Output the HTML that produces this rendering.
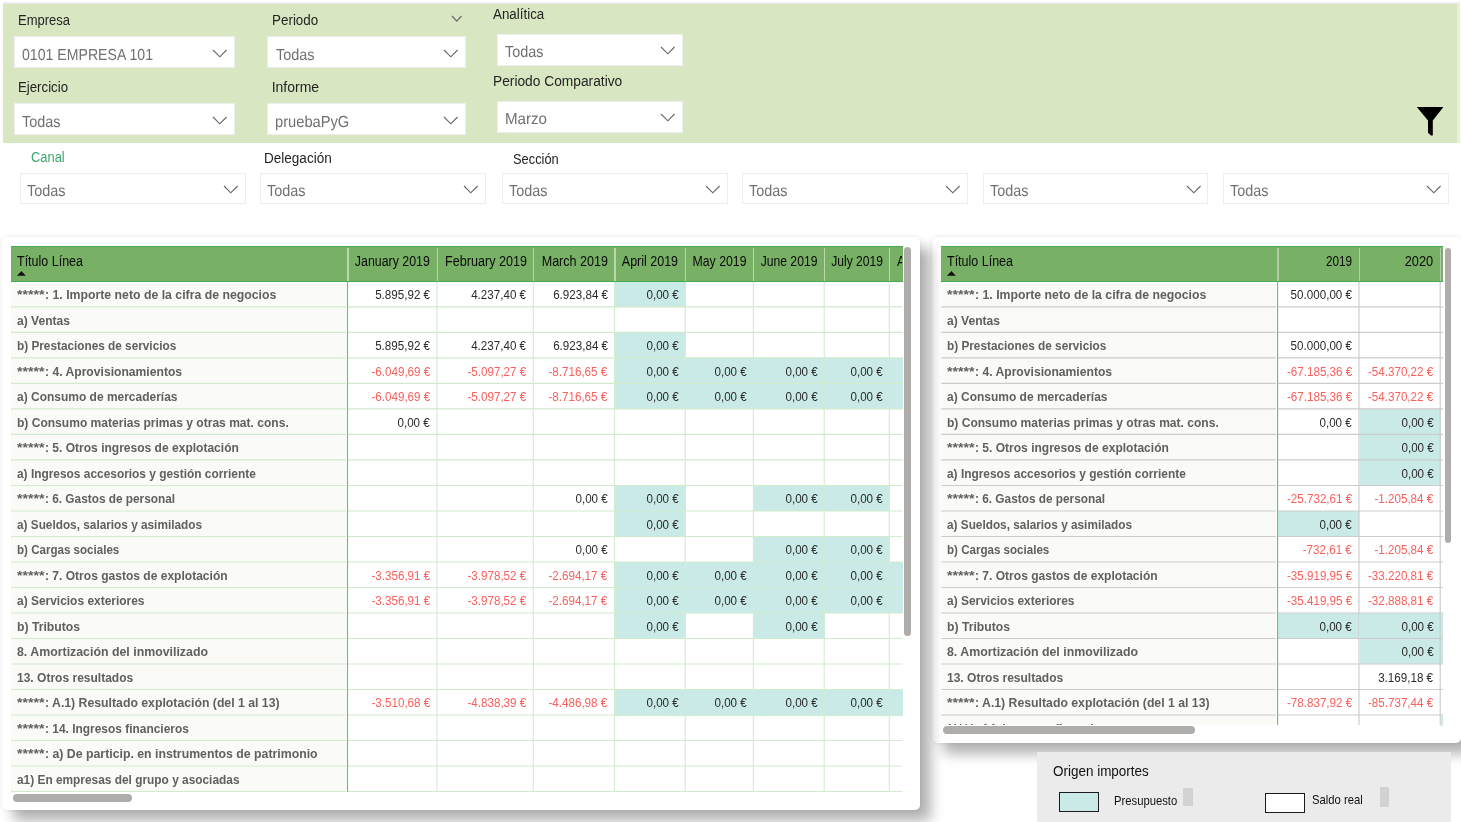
<!DOCTYPE html><html lang="es"><head><meta charset="utf-8"><title>Informe PyG</title><style>
html,body{margin:0;padding:0;background:#fff;}
body{width:1461px;height:822px;overflow:hidden;position:relative;font-family:"Liberation Sans",sans-serif;color:#222;}
#root{position:absolute;left:0;top:0;width:1461px;height:822px;will-change:transform;}
.t{position:absolute;white-space:nowrap;line-height:20px;}
.abs{position:absolute;}
.bar{position:absolute;left:3px;top:4px;width:1454px;height:139px;background:#d8e6c2;}
.dd{position:absolute;background:#fff;border:1.5px solid #ededed;box-sizing:border-box;}
.card{position:absolute;background:#fff;border-radius:5px;box-shadow:11px 11px 13px rgba(0,0,0,.30),0 0 5px rgba(0,0,0,.10);}
.hdr{position:absolute;background:#78b166;border-top:1px solid #4bab55;border-bottom:1px solid #44aa50;box-sizing:border-box;}
.sb{position:absolute;background:#aeadab;border-radius:4px;}
</style></head><body><div id="root">
<div class="abs" style="left:3px;top:2px;width:1457px;height:1px;background:#f1f1f2"></div>
<div class="abs" style="left:3px;top:3px;width:1457px;height:1px;background:#e8e8ea"></div>
<div class="bar"></div>
<div class="abs" style="left:1457px;top:4px;width:2.5px;height:139px;background:#e6f3d2"></div>
<div class="t" style="top:10px;font-size:14px;left:18.00px;color:#252423;transform:scaleX(0.9281);transform-origin:left center;">Empresa</div>
<div class="dd" style="left:14px;top:36px;width:221.00px;height:32.00px"></div>
<div class="t" style="top:46px;font-size:16px;left:21.50px;color:#707070;text-rendering:geometricPrecision;transform:scaleX(0.8819);transform-origin:left center;">0101 EMPRESA 101</div>
<svg class="abs" style="left:211.2px;top:47.9px" width="17.600000000000023" height="10.799999999999997" viewBox="-2 -2 17.600000000000023 10.799999999999997"><polyline points="0,0 6.800000000000011,6.799999999999997 13.600000000000023,0" fill="none" stroke="#666" stroke-width="1.1" stroke-linecap="butt" stroke-linejoin="miter"/></svg>
<div class="t" style="top:77px;font-size:14px;left:18.00px;color:#252423;transform:scaleX(0.9451);transform-origin:left center;">Ejercicio</div>
<div class="dd" style="left:14px;top:103px;width:221.00px;height:32.00px"></div>
<div class="t" style="top:113px;font-size:16px;left:22.00px;color:#707070;text-rendering:geometricPrecision;transform:scaleX(0.9016);transform-origin:left center;">Todas</div>
<svg class="abs" style="left:211.2px;top:114.9px" width="17.600000000000023" height="10.799999999999997" viewBox="-2 -2 17.600000000000023 10.799999999999997"><polyline points="0,0 6.800000000000011,6.799999999999997 13.600000000000023,0" fill="none" stroke="#666" stroke-width="1.1" stroke-linecap="butt" stroke-linejoin="miter"/></svg>
<div class="t" style="top:10px;font-size:14px;left:271.70px;color:#252423;transform:scaleX(0.9582);transform-origin:left center;">Periodo</div>
<div class="dd" style="left:267px;top:36px;width:198.80px;height:32.00px"></div>
<div class="t" style="top:46px;font-size:16px;left:275.50px;color:#707070;text-rendering:geometricPrecision;transform:scaleX(0.9016);transform-origin:left center;">Todas</div>
<svg class="abs" style="left:442.0px;top:47.9px" width="17.600000000000023" height="10.799999999999997" viewBox="-2 -2 17.600000000000023 10.799999999999997"><polyline points="0,0 6.800000000000011,6.799999999999997 13.600000000000023,0" fill="none" stroke="#666" stroke-width="1.1" stroke-linecap="butt" stroke-linejoin="miter"/></svg>
<svg class="abs" style="left:450px;top:13.5px" width="13.5" height="9.2" viewBox="-2 -2 13.5 9.2"><polyline points="0,0 4.75,5.199999999999999 9.5,0" fill="none" stroke="#6a6a6a" stroke-width="1.2" stroke-linecap="butt" stroke-linejoin="miter"/></svg>
<div class="t" style="top:77px;font-size:14px;left:271.70px;color:#252423;">Informe</div>
<div class="dd" style="left:267px;top:103px;width:198.80px;height:32.00px"></div>
<div class="t" style="top:113px;font-size:16px;left:275.00px;color:#707070;text-rendering:geometricPrecision;transform:scaleX(0.9174);transform-origin:left center;">pruebaPyG</div>
<svg class="abs" style="left:442.0px;top:114.9px" width="17.600000000000023" height="10.799999999999997" viewBox="-2 -2 17.600000000000023 10.799999999999997"><polyline points="0,0 6.800000000000011,6.799999999999997 13.600000000000023,0" fill="none" stroke="#666" stroke-width="1.1" stroke-linecap="butt" stroke-linejoin="miter"/></svg>
<div class="t" style="top:4px;font-size:14px;left:492.50px;color:#252423;transform:scaleX(0.9543);transform-origin:left center;">Analítica</div>
<div class="dd" style="left:497px;top:34px;width:186.20px;height:32.00px"></div>
<div class="t" style="top:43px;font-size:16px;left:505.00px;color:#707070;text-rendering:geometricPrecision;transform:scaleX(0.9016);transform-origin:left center;">Todas</div>
<svg class="abs" style="left:659.4000000000001px;top:44.6px" width="17.59999999999991" height="10.799999999999997" viewBox="-2 -2 17.59999999999991 10.799999999999997"><polyline points="0,0 6.7999999999999545,6.799999999999997 13.599999999999909,0" fill="none" stroke="#666" stroke-width="1.1" stroke-linecap="butt" stroke-linejoin="miter"/></svg>
<div class="t" style="top:71px;font-size:14px;left:492.50px;color:#252423;transform:scaleX(0.9828);transform-origin:left center;">Periodo Comparativo</div>
<div class="dd" style="left:497px;top:100.5px;width:186.20px;height:32.00px"></div>
<div class="t" style="top:110px;font-size:16px;left:505.00px;color:#707070;text-rendering:geometricPrecision;transform:scaleX(0.9448);transform-origin:left center;">Marzo</div>
<svg class="abs" style="left:659.4000000000001px;top:111.6px" width="17.59999999999991" height="10.799999999999997" viewBox="-2 -2 17.59999999999991 10.799999999999997"><polyline points="0,0 6.7999999999999545,6.799999999999997 13.599999999999909,0" fill="none" stroke="#666" stroke-width="1.1" stroke-linecap="butt" stroke-linejoin="miter"/></svg>
<svg class="abs" style="left:1414px;top:104px" width="34" height="36" viewBox="1414 104 34 36"><path d="M1416.8 107 L1443.4 107 L1432.8 120.6 L1432.8 135.5 L1431 135.5 L1428 132.8 L1428 120.6 Z" fill="#000"/></svg>
<div class="t" style="top:147px;font-size:14px;left:30.50px;color:#3ea66e;transform:scaleX(0.9223);transform-origin:left center;">Canal</div>
<div class="t" style="top:148px;font-size:14px;left:264.20px;color:#252423;transform:scaleX(0.9670);transform-origin:left center;">Delegación</div>
<div class="t" style="top:149px;font-size:14px;left:512.50px;color:#252423;transform:scaleX(0.9184);transform-origin:left center;">Sección</div>
<div class="dd" style="left:20px;top:172.5px;width:225.80px;height:31.50px"></div>
<div class="t" style="top:182px;font-size:16px;left:27.00px;color:#707070;text-rendering:geometricPrecision;transform:scaleX(0.9016);transform-origin:left center;">Todas</div>
<svg class="abs" style="left:222.0px;top:184.1px" width="17.600000000000023" height="10.800000000000011" viewBox="-2 -2 17.600000000000023 10.800000000000011"><polyline points="0,0 6.800000000000011,6.800000000000011 13.600000000000023,0" fill="none" stroke="#666" stroke-width="1.1" stroke-linecap="butt" stroke-linejoin="miter"/></svg>
<div class="dd" style="left:260px;top:172.5px;width:225.80px;height:31.50px"></div>
<div class="t" style="top:182px;font-size:16px;left:267.00px;color:#707070;text-rendering:geometricPrecision;transform:scaleX(0.9016);transform-origin:left center;">Todas</div>
<svg class="abs" style="left:462.0px;top:184.1px" width="17.600000000000023" height="10.800000000000011" viewBox="-2 -2 17.600000000000023 10.800000000000011"><polyline points="0,0 6.800000000000011,6.800000000000011 13.600000000000023,0" fill="none" stroke="#666" stroke-width="1.1" stroke-linecap="butt" stroke-linejoin="miter"/></svg>
<div class="dd" style="left:502px;top:172.5px;width:225.80px;height:31.50px"></div>
<div class="t" style="top:182px;font-size:16px;left:509.00px;color:#707070;text-rendering:geometricPrecision;transform:scaleX(0.9016);transform-origin:left center;">Todas</div>
<svg class="abs" style="left:704.0px;top:184.1px" width="17.59999999999991" height="10.800000000000011" viewBox="-2 -2 17.59999999999991 10.800000000000011"><polyline points="0,0 6.7999999999999545,6.800000000000011 13.599999999999909,0" fill="none" stroke="#666" stroke-width="1.1" stroke-linecap="butt" stroke-linejoin="miter"/></svg>
<div class="dd" style="left:742px;top:172.5px;width:225.80px;height:31.50px"></div>
<div class="t" style="top:182px;font-size:16px;left:749.00px;color:#707070;text-rendering:geometricPrecision;transform:scaleX(0.9016);transform-origin:left center;">Todas</div>
<svg class="abs" style="left:944.0px;top:184.1px" width="17.59999999999991" height="10.800000000000011" viewBox="-2 -2 17.59999999999991 10.800000000000011"><polyline points="0,0 6.7999999999999545,6.800000000000011 13.599999999999909,0" fill="none" stroke="#666" stroke-width="1.1" stroke-linecap="butt" stroke-linejoin="miter"/></svg>
<div class="dd" style="left:982.5px;top:172.5px;width:225.80px;height:31.50px"></div>
<div class="t" style="top:182px;font-size:16px;left:989.50px;color:#707070;text-rendering:geometricPrecision;transform:scaleX(0.9016);transform-origin:left center;">Todas</div>
<svg class="abs" style="left:1184.5px;top:184.1px" width="17.59999999999991" height="10.800000000000011" viewBox="-2 -2 17.59999999999991 10.800000000000011"><polyline points="0,0 6.7999999999999545,6.800000000000011 13.599999999999909,0" fill="none" stroke="#666" stroke-width="1.1" stroke-linecap="butt" stroke-linejoin="miter"/></svg>
<div class="dd" style="left:1223px;top:172.5px;width:225.80px;height:31.50px"></div>
<div class="t" style="top:182px;font-size:16px;left:1230.00px;color:#707070;text-rendering:geometricPrecision;transform:scaleX(0.9016);transform-origin:left center;">Todas</div>
<svg class="abs" style="left:1425.0px;top:184.1px" width="17.59999999999991" height="10.800000000000011" viewBox="-2 -2 17.59999999999991 10.800000000000011"><polyline points="0,0 6.7999999999999545,6.800000000000011 13.599999999999909,0" fill="none" stroke="#666" stroke-width="1.1" stroke-linecap="butt" stroke-linejoin="miter"/></svg>
<div class="card" style="left:932px;top:236.5px;width:528.5px;height:506.5px"></div>
<div class="card" style="left:2px;top:236.5px;width:918.2px;height:573.5px"></div>
<div class="abs" style="left:11px;top:283.00px;width:334.80px;height:509.00px;background:#fafaf6"></div>
<div class="abs" style="left:615.00px;top:281.90px;width:70.80px;height:25.51px;background:#c9eae6"></div>
<div class="abs" style="left:615.00px;top:332.91px;width:70.80px;height:25.51px;background:#c9eae6"></div>
<div class="abs" style="left:615.00px;top:358.42px;width:70.80px;height:25.51px;background:#c9eae6"></div>
<div class="abs" style="left:685.80px;top:358.42px;width:68.10px;height:25.51px;background:#c9eae6"></div>
<div class="abs" style="left:753.90px;top:358.42px;width:70.80px;height:25.51px;background:#c9eae6"></div>
<div class="abs" style="left:824.70px;top:358.42px;width:65.10px;height:25.51px;background:#c9eae6"></div>
<div class="abs" style="left:889.80px;top:358.42px;width:13.20px;height:25.51px;background:#c9eae6"></div>
<div class="abs" style="left:615.00px;top:383.92px;width:70.80px;height:25.51px;background:#c9eae6"></div>
<div class="abs" style="left:685.80px;top:383.92px;width:68.10px;height:25.51px;background:#c9eae6"></div>
<div class="abs" style="left:753.90px;top:383.92px;width:70.80px;height:25.51px;background:#c9eae6"></div>
<div class="abs" style="left:824.70px;top:383.92px;width:65.10px;height:25.51px;background:#c9eae6"></div>
<div class="abs" style="left:889.80px;top:383.92px;width:13.20px;height:25.51px;background:#c9eae6"></div>
<div class="abs" style="left:615.00px;top:485.95px;width:70.80px;height:25.51px;background:#c9eae6"></div>
<div class="abs" style="left:753.90px;top:485.95px;width:70.80px;height:25.51px;background:#c9eae6"></div>
<div class="abs" style="left:824.70px;top:485.95px;width:65.10px;height:25.51px;background:#c9eae6"></div>
<div class="abs" style="left:615.00px;top:511.45px;width:70.80px;height:25.51px;background:#c9eae6"></div>
<div class="abs" style="left:753.90px;top:536.96px;width:70.80px;height:25.51px;background:#c9eae6"></div>
<div class="abs" style="left:824.70px;top:536.96px;width:65.10px;height:25.51px;background:#c9eae6"></div>
<div class="abs" style="left:615.00px;top:562.47px;width:70.80px;height:25.51px;background:#c9eae6"></div>
<div class="abs" style="left:685.80px;top:562.47px;width:68.10px;height:25.51px;background:#c9eae6"></div>
<div class="abs" style="left:753.90px;top:562.47px;width:70.80px;height:25.51px;background:#c9eae6"></div>
<div class="abs" style="left:824.70px;top:562.47px;width:65.10px;height:25.51px;background:#c9eae6"></div>
<div class="abs" style="left:889.80px;top:562.47px;width:13.20px;height:25.51px;background:#c9eae6"></div>
<div class="abs" style="left:615.00px;top:587.97px;width:70.80px;height:25.51px;background:#c9eae6"></div>
<div class="abs" style="left:685.80px;top:587.97px;width:68.10px;height:25.51px;background:#c9eae6"></div>
<div class="abs" style="left:753.90px;top:587.97px;width:70.80px;height:25.51px;background:#c9eae6"></div>
<div class="abs" style="left:824.70px;top:587.97px;width:65.10px;height:25.51px;background:#c9eae6"></div>
<div class="abs" style="left:889.80px;top:587.97px;width:13.20px;height:25.51px;background:#c9eae6"></div>
<div class="abs" style="left:615.00px;top:613.48px;width:70.80px;height:25.51px;background:#c9eae6"></div>
<div class="abs" style="left:753.90px;top:613.48px;width:70.80px;height:25.51px;background:#c9eae6"></div>
<div class="abs" style="left:615.00px;top:690.00px;width:70.80px;height:25.51px;background:#c9eae6"></div>
<div class="abs" style="left:685.80px;top:690.00px;width:68.10px;height:25.51px;background:#c9eae6"></div>
<div class="abs" style="left:753.90px;top:690.00px;width:70.80px;height:25.51px;background:#c9eae6"></div>
<div class="abs" style="left:824.70px;top:690.00px;width:65.10px;height:25.51px;background:#c9eae6"></div>
<div class="abs" style="left:889.80px;top:690.00px;width:13.20px;height:25.51px;background:#c9eae6"></div>
<svg class="abs" style="left:11px;top:281px" width="891.50" height="511.00" viewBox="0 0 891.50 511.00"><path d="M0.00 25.91H891.50M0.00 51.41H891.50M0.00 76.92H891.50M0.00 102.42H891.50M0.00 127.93H891.50M0.00 153.44H891.50M0.00 178.94H891.50M0.00 204.45H891.50M0.00 229.95H891.50M0.00 255.46H891.50M0.00 280.97H891.50M0.00 306.47H891.50M0.00 331.98H891.50M0.00 357.48H891.50M0.00 382.99H891.50M0.00 408.50H891.50M0.00 434.00H891.50M0.00 459.51H891.50M0.00 485.01H891.50M0.00 510.52H891.50" stroke="#d1ebcd" stroke-width="1.15" fill="none"/><path d="M426.00 0.40V511.00M522.35 0.40V511.00M603.50 0.40V511.00M674.30 0.40V511.00M742.40 0.40V511.00M813.20 0.40V511.00M878.30 0.40V511.00" stroke="#d3edd0" stroke-width="1.15" fill="none"/><path d="M335.40 0.40V511.00" stroke="#fff" stroke-width="1.1" fill="none"/><path d="M336.50 0.40V511.00" stroke="#70be7d" stroke-width="1.15" fill="none"/></svg>
<div class="t" style="top:285px;font-size:12.5px;left:17.00px;color:#606060;font-weight:700;transform:scaleX(1.1304);transform-origin:left center;">*****</div>
<div class="t" style="top:285px;font-size:12.5px;left:44.90px;color:#606060;font-weight:700;transform:scaleX(0.9825);transform-origin:left center;">: 1. Importe neto de la cifra de negocios</div>
<div class="t" style="top:285px;font-size:12.5px;right:1030.80px;color:#2b2b2b;transform:scaleX(0.9300);transform-origin:right center;">5.895,92 €</div>
<div class="t" style="top:285px;font-size:12.5px;right:934.45px;color:#2b2b2b;transform:scaleX(0.9300);transform-origin:right center;">4.237,40 €</div>
<div class="t" style="top:285px;font-size:12.5px;right:853.30px;color:#2b2b2b;transform:scaleX(0.9300);transform-origin:right center;">6.923,84 €</div>
<div class="t" style="top:285px;font-size:12.5px;right:782.50px;color:#2b2b2b;transform:scaleX(0.9300);transform-origin:right center;">0,00 €</div>
<div class="t" style="top:311px;font-size:12.5px;left:17.00px;color:#606060;font-weight:700;transform:scaleX(0.9656);transform-origin:left center;">a) Ventas</div>
<div class="t" style="top:336px;font-size:12.5px;left:17.00px;color:#606060;font-weight:700;transform:scaleX(0.9432);transform-origin:left center;">b) Prestaciones de servicios</div>
<div class="t" style="top:336px;font-size:12.5px;right:1030.80px;color:#2b2b2b;transform:scaleX(0.9300);transform-origin:right center;">5.895,92 €</div>
<div class="t" style="top:336px;font-size:12.5px;right:934.45px;color:#2b2b2b;transform:scaleX(0.9300);transform-origin:right center;">4.237,40 €</div>
<div class="t" style="top:336px;font-size:12.5px;right:853.30px;color:#2b2b2b;transform:scaleX(0.9300);transform-origin:right center;">6.923,84 €</div>
<div class="t" style="top:336px;font-size:12.5px;right:782.50px;color:#2b2b2b;transform:scaleX(0.9300);transform-origin:right center;">0,00 €</div>
<div class="t" style="top:362px;font-size:12.5px;left:17.00px;color:#606060;font-weight:700;transform:scaleX(1.1304);transform-origin:left center;">*****</div>
<div class="t" style="top:362px;font-size:12.5px;left:44.90px;color:#606060;font-weight:700;transform:scaleX(0.9707);transform-origin:left center;">: 4. Aprovisionamientos</div>
<div class="t" style="top:362px;font-size:12.5px;right:1030.80px;color:#fa5f5b;transform:scaleX(0.9300);transform-origin:right center;">-6.049,69 €</div>
<div class="t" style="top:362px;font-size:12.5px;right:934.45px;color:#fa5f5b;transform:scaleX(0.9300);transform-origin:right center;">-5.097,27 €</div>
<div class="t" style="top:362px;font-size:12.5px;right:853.30px;color:#fa5f5b;transform:scaleX(0.9300);transform-origin:right center;">-8.716,65 €</div>
<div class="t" style="top:362px;font-size:12.5px;right:782.50px;color:#2b2b2b;transform:scaleX(0.9300);transform-origin:right center;">0,00 €</div>
<div class="t" style="top:362px;font-size:12.5px;right:714.40px;color:#2b2b2b;transform:scaleX(0.9300);transform-origin:right center;">0,00 €</div>
<div class="t" style="top:362px;font-size:12.5px;right:643.60px;color:#2b2b2b;transform:scaleX(0.9300);transform-origin:right center;">0,00 €</div>
<div class="t" style="top:362px;font-size:12.5px;right:578.50px;color:#2b2b2b;transform:scaleX(0.9300);transform-origin:right center;">0,00 €</div>
<div class="t" style="top:387px;font-size:12.5px;left:17.00px;color:#606060;font-weight:700;transform:scaleX(0.9587);transform-origin:left center;">a) Consumo de mercaderías</div>
<div class="t" style="top:387px;font-size:12.5px;right:1030.80px;color:#fa5f5b;transform:scaleX(0.9300);transform-origin:right center;">-6.049,69 €</div>
<div class="t" style="top:387px;font-size:12.5px;right:934.45px;color:#fa5f5b;transform:scaleX(0.9300);transform-origin:right center;">-5.097,27 €</div>
<div class="t" style="top:387px;font-size:12.5px;right:853.30px;color:#fa5f5b;transform:scaleX(0.9300);transform-origin:right center;">-8.716,65 €</div>
<div class="t" style="top:387px;font-size:12.5px;right:782.50px;color:#2b2b2b;transform:scaleX(0.9300);transform-origin:right center;">0,00 €</div>
<div class="t" style="top:387px;font-size:12.5px;right:714.40px;color:#2b2b2b;transform:scaleX(0.9300);transform-origin:right center;">0,00 €</div>
<div class="t" style="top:387px;font-size:12.5px;right:643.60px;color:#2b2b2b;transform:scaleX(0.9300);transform-origin:right center;">0,00 €</div>
<div class="t" style="top:387px;font-size:12.5px;right:578.50px;color:#2b2b2b;transform:scaleX(0.9300);transform-origin:right center;">0,00 €</div>
<div class="t" style="top:413px;font-size:12.5px;left:17.00px;color:#606060;font-weight:700;transform:scaleX(0.9635);transform-origin:left center;">b) Consumo materias primas y otras mat. cons.</div>
<div class="t" style="top:413px;font-size:12.5px;right:1030.80px;color:#2b2b2b;transform:scaleX(0.9300);transform-origin:right center;">0,00 €</div>
<div class="t" style="top:438px;font-size:12.5px;left:17.00px;color:#606060;font-weight:700;transform:scaleX(1.1304);transform-origin:left center;">*****</div>
<div class="t" style="top:438px;font-size:12.5px;left:44.90px;color:#606060;font-weight:700;transform:scaleX(0.9623);transform-origin:left center;">: 5. Otros ingresos de explotación</div>
<div class="t" style="top:464px;font-size:12.5px;left:17.00px;color:#606060;font-weight:700;transform:scaleX(0.9520);transform-origin:left center;">a) Ingresos accesorios y gestión corriente</div>
<div class="t" style="top:489px;font-size:12.5px;left:17.00px;color:#606060;font-weight:700;transform:scaleX(1.1304);transform-origin:left center;">*****</div>
<div class="t" style="top:489px;font-size:12.5px;left:44.90px;color:#606060;font-weight:700;transform:scaleX(0.9459);transform-origin:left center;">: 6. Gastos de personal</div>
<div class="t" style="top:489px;font-size:12.5px;right:853.30px;color:#2b2b2b;transform:scaleX(0.9300);transform-origin:right center;">0,00 €</div>
<div class="t" style="top:489px;font-size:12.5px;right:782.50px;color:#2b2b2b;transform:scaleX(0.9300);transform-origin:right center;">0,00 €</div>
<div class="t" style="top:489px;font-size:12.5px;right:643.60px;color:#2b2b2b;transform:scaleX(0.9300);transform-origin:right center;">0,00 €</div>
<div class="t" style="top:489px;font-size:12.5px;right:578.50px;color:#2b2b2b;transform:scaleX(0.9300);transform-origin:right center;">0,00 €</div>
<div class="t" style="top:515px;font-size:12.5px;left:17.00px;color:#606060;font-weight:700;transform:scaleX(0.9443);transform-origin:left center;">a) Sueldos, salarios y asimilados</div>
<div class="t" style="top:515px;font-size:12.5px;right:782.50px;color:#2b2b2b;transform:scaleX(0.9300);transform-origin:right center;">0,00 €</div>
<div class="t" style="top:540px;font-size:12.5px;left:17.00px;color:#606060;font-weight:700;transform:scaleX(0.9256);transform-origin:left center;">b) Cargas sociales</div>
<div class="t" style="top:540px;font-size:12.5px;right:853.30px;color:#2b2b2b;transform:scaleX(0.9300);transform-origin:right center;">0,00 €</div>
<div class="t" style="top:540px;font-size:12.5px;right:643.60px;color:#2b2b2b;transform:scaleX(0.9300);transform-origin:right center;">0,00 €</div>
<div class="t" style="top:540px;font-size:12.5px;right:578.50px;color:#2b2b2b;transform:scaleX(0.9300);transform-origin:right center;">0,00 €</div>
<div class="t" style="top:566px;font-size:12.5px;left:17.00px;color:#606060;font-weight:700;transform:scaleX(1.1304);transform-origin:left center;">*****</div>
<div class="t" style="top:566px;font-size:12.5px;left:44.90px;color:#606060;font-weight:700;transform:scaleX(0.9630);transform-origin:left center;">: 7. Otros gastos de explotación</div>
<div class="t" style="top:566px;font-size:12.5px;right:1030.80px;color:#fa5f5b;transform:scaleX(0.9300);transform-origin:right center;">-3.356,91 €</div>
<div class="t" style="top:566px;font-size:12.5px;right:934.45px;color:#fa5f5b;transform:scaleX(0.9300);transform-origin:right center;">-3.978,52 €</div>
<div class="t" style="top:566px;font-size:12.5px;right:853.30px;color:#fa5f5b;transform:scaleX(0.9300);transform-origin:right center;">-2.694,17 €</div>
<div class="t" style="top:566px;font-size:12.5px;right:782.50px;color:#2b2b2b;transform:scaleX(0.9300);transform-origin:right center;">0,00 €</div>
<div class="t" style="top:566px;font-size:12.5px;right:714.40px;color:#2b2b2b;transform:scaleX(0.9300);transform-origin:right center;">0,00 €</div>
<div class="t" style="top:566px;font-size:12.5px;right:643.60px;color:#2b2b2b;transform:scaleX(0.9300);transform-origin:right center;">0,00 €</div>
<div class="t" style="top:566px;font-size:12.5px;right:578.50px;color:#2b2b2b;transform:scaleX(0.9300);transform-origin:right center;">0,00 €</div>
<div class="t" style="top:591px;font-size:12.5px;left:17.00px;color:#606060;font-weight:700;transform:scaleX(0.9556);transform-origin:left center;">a) Servicios exteriores</div>
<div class="t" style="top:591px;font-size:12.5px;right:1030.80px;color:#fa5f5b;transform:scaleX(0.9300);transform-origin:right center;">-3.356,91 €</div>
<div class="t" style="top:591px;font-size:12.5px;right:934.45px;color:#fa5f5b;transform:scaleX(0.9300);transform-origin:right center;">-3.978,52 €</div>
<div class="t" style="top:591px;font-size:12.5px;right:853.30px;color:#fa5f5b;transform:scaleX(0.9300);transform-origin:right center;">-2.694,17 €</div>
<div class="t" style="top:591px;font-size:12.5px;right:782.50px;color:#2b2b2b;transform:scaleX(0.9300);transform-origin:right center;">0,00 €</div>
<div class="t" style="top:591px;font-size:12.5px;right:714.40px;color:#2b2b2b;transform:scaleX(0.9300);transform-origin:right center;">0,00 €</div>
<div class="t" style="top:591px;font-size:12.5px;right:643.60px;color:#2b2b2b;transform:scaleX(0.9300);transform-origin:right center;">0,00 €</div>
<div class="t" style="top:591px;font-size:12.5px;right:578.50px;color:#2b2b2b;transform:scaleX(0.9300);transform-origin:right center;">0,00 €</div>
<div class="t" style="top:617px;font-size:12.5px;left:17.00px;color:#606060;font-weight:700;transform:scaleX(0.9756);transform-origin:left center;">b) Tributos</div>
<div class="t" style="top:617px;font-size:12.5px;right:782.50px;color:#2b2b2b;transform:scaleX(0.9300);transform-origin:right center;">0,00 €</div>
<div class="t" style="top:617px;font-size:12.5px;right:643.60px;color:#2b2b2b;transform:scaleX(0.9300);transform-origin:right center;">0,00 €</div>
<div class="t" style="top:642px;font-size:12.5px;left:17.00px;color:#606060;font-weight:700;transform:scaleX(0.9880);transform-origin:left center;">8. Amortización del inmovilizado</div>
<div class="t" style="top:668px;font-size:12.5px;left:17.00px;color:#606060;font-weight:700;transform:scaleX(0.9617);transform-origin:left center;">13. Otros resultados</div>
<div class="t" style="top:693px;font-size:12.5px;left:17.00px;color:#606060;font-weight:700;transform:scaleX(1.1304);transform-origin:left center;">*****</div>
<div class="t" style="top:693px;font-size:12.5px;left:44.90px;color:#606060;font-weight:700;transform:scaleX(0.9808);transform-origin:left center;">: A.1) Resultado explotación (del 1 al 13)</div>
<div class="t" style="top:693px;font-size:12.5px;right:1030.80px;color:#fa5f5b;transform:scaleX(0.9300);transform-origin:right center;">-3.510,68 €</div>
<div class="t" style="top:693px;font-size:12.5px;right:934.45px;color:#fa5f5b;transform:scaleX(0.9300);transform-origin:right center;">-4.838,39 €</div>
<div class="t" style="top:693px;font-size:12.5px;right:853.30px;color:#fa5f5b;transform:scaleX(0.9300);transform-origin:right center;">-4.486,98 €</div>
<div class="t" style="top:693px;font-size:12.5px;right:782.50px;color:#2b2b2b;transform:scaleX(0.9300);transform-origin:right center;">0,00 €</div>
<div class="t" style="top:693px;font-size:12.5px;right:714.40px;color:#2b2b2b;transform:scaleX(0.9300);transform-origin:right center;">0,00 €</div>
<div class="t" style="top:693px;font-size:12.5px;right:643.60px;color:#2b2b2b;transform:scaleX(0.9300);transform-origin:right center;">0,00 €</div>
<div class="t" style="top:693px;font-size:12.5px;right:578.50px;color:#2b2b2b;transform:scaleX(0.9300);transform-origin:right center;">0,00 €</div>
<div class="t" style="top:719px;font-size:12.5px;left:17.00px;color:#606060;font-weight:700;transform:scaleX(1.1304);transform-origin:left center;">*****</div>
<div class="t" style="top:719px;font-size:12.5px;left:44.90px;color:#606060;font-weight:700;transform:scaleX(0.9542);transform-origin:left center;">: 14. Ingresos financieros</div>
<div class="t" style="top:744px;font-size:12.5px;left:17.00px;color:#606060;font-weight:700;transform:scaleX(1.1304);transform-origin:left center;">*****</div>
<div class="t" style="top:744px;font-size:12.5px;left:44.90px;color:#606060;font-weight:700;transform:scaleX(0.9837);transform-origin:left center;">: a) De particip. en instrumentos de patrimonio</div>
<div class="t" style="top:770px;font-size:12.5px;left:17.00px;color:#606060;font-weight:700;transform:scaleX(0.9503);transform-origin:left center;">a1) En empresas del grupo y asociadas</div>
<div class="hdr" style="left:11px;top:246px;width:891.5px;height:36px"></div>
<div class="t" style="top:251px;font-size:14px;left:17.00px;color:#0a0a0a;transform:scaleX(0.8926);transform-origin:left center;">Título Línea</div>
<svg class="abs" style="left:17.0px;top:271.3px" width="9" height="5" viewBox="0 0 9 5"><path d="M0 4.8 L4.4 0 L8.8 4.8 Z" fill="#111"/></svg>
<div class="abs" style="left:347.00px;top:247.5px;width:1.8px;height:33.3px;background:#b6dab0"></div>
<div class="abs" style="left:436.50px;top:247.5px;width:1.6px;height:33.3px;background:#b6dab0"></div>
<div class="t" style="top:251px;font-size:14px;right:1030.80px;color:#0a0a0a;transform:scaleX(0.8840);transform-origin:right center;">January 2019</div>
<div class="abs" style="left:532.85px;top:247.5px;width:1.6px;height:33.3px;background:#b6dab0"></div>
<div class="t" style="top:251px;font-size:14px;right:934.45px;color:#0a0a0a;transform:scaleX(0.9005);transform-origin:right center;">February 2019</div>
<div class="abs" style="left:614.00px;top:247.5px;width:1.6px;height:33.3px;background:#b6dab0"></div>
<div class="t" style="top:251px;font-size:14px;right:853.30px;color:#0a0a0a;transform:scaleX(0.8960);transform-origin:right center;">March 2019</div>
<div class="abs" style="left:684.80px;top:247.5px;width:1.6px;height:33.3px;background:#b6dab0"></div>
<div class="t" style="top:251px;font-size:14px;right:782.50px;color:#0a0a0a;transform:scaleX(0.8922);transform-origin:right center;">April 2019</div>
<div class="abs" style="left:752.90px;top:247.5px;width:1.6px;height:33.3px;background:#b6dab0"></div>
<div class="t" style="top:251px;font-size:14px;right:714.40px;color:#0a0a0a;transform:scaleX(0.8783);transform-origin:right center;">May 2019</div>
<div class="abs" style="left:823.70px;top:247.5px;width:1.6px;height:33.3px;background:#b6dab0"></div>
<div class="t" style="top:251px;font-size:14px;right:643.60px;color:#0a0a0a;transform:scaleX(0.8677);transform-origin:right center;">June 2019</div>
<div class="abs" style="left:888.80px;top:247.5px;width:1.6px;height:33.3px;background:#b6dab0"></div>
<div class="t" style="top:251px;font-size:14px;right:578.50px;color:#0a0a0a;transform:scaleX(0.8634);transform-origin:right center;">July 2019</div>
<div class="abs" style="left:889.3px;top:246px;width:13.2px;height:36px;overflow:hidden">
<div class="t" style="top:5px;font-size:14px;left:7.50px;color:#0a0a0a;transform:scaleX(0.8850);transform-origin:left center;">A</div>
</div>
<div class="abs" style="left:941.2px;top:283.00px;width:334.65px;height:442.00px;background:#fafaf6"></div>
<div class="abs" style="left:1359.50px;top:409.43px;width:81.20px;height:25.51px;background:#c9eae6"></div>
<div class="abs" style="left:1359.50px;top:434.94px;width:81.20px;height:25.51px;background:#c9eae6"></div>
<div class="abs" style="left:1359.50px;top:460.44px;width:81.20px;height:25.51px;background:#c9eae6"></div>
<div class="abs" style="left:1278.05px;top:511.45px;width:81.45px;height:25.51px;background:#c9eae6"></div>
<div class="abs" style="left:1278.05px;top:613.48px;width:81.45px;height:25.51px;background:#c9eae6"></div>
<div class="abs" style="left:1359.50px;top:613.48px;width:81.20px;height:25.51px;background:#c9eae6"></div>
<div class="abs" style="left:1440.70px;top:613.48px;width:2.80px;height:25.51px;background:#c9eae6"></div>
<div class="abs" style="left:1359.50px;top:638.98px;width:81.20px;height:25.51px;background:#c9eae6"></div>
<div class="abs" style="left:1440.70px;top:638.98px;width:2.80px;height:25.51px;background:#c9eae6"></div>
<div class="abs" style="left:1440.70px;top:715.50px;width:2.80px;height:10.00px;background:#c9eae6"></div>
<svg class="abs" style="left:941px;top:281px" width="502.00" height="444.00" viewBox="0 0 502.00 444.00"><path d="M0.20 25.91H502.00M0.20 51.41H502.00M0.20 76.92H502.00M0.20 102.42H502.00M0.20 127.93H502.00M0.20 153.44H502.00M0.20 178.94H502.00M0.20 204.45H502.00M0.20 229.95H502.00M0.20 255.46H502.00M0.20 280.97H502.00M0.20 306.47H502.00M0.20 331.98H502.00M0.20 357.48H502.00M0.20 382.99H502.00M0.20 408.50H502.00M0.20 434.00H502.00" stroke="#cccccc" stroke-width="1.15" fill="none"/><path d="M418.00 0.40V444.00M499.20 0.40V444.00" stroke="#cbcbcb" stroke-width="1.15" fill="none"/><path d="M335.45 0.40V444.00" stroke="#fff" stroke-width="1.1" fill="none"/><path d="M336.55 0.40V444.00" stroke="#70be7d" stroke-width="1.15" fill="none"/></svg>
<div class="t" style="top:285px;font-size:12.5px;left:947.20px;color:#606060;font-weight:700;transform:scaleX(1.1304);transform-origin:left center;">*****</div>
<div class="t" style="top:285px;font-size:12.5px;left:975.10px;color:#606060;font-weight:700;transform:scaleX(0.9825);transform-origin:left center;">: 1. Importe neto de la cifra de negocios</div>
<div class="t" style="top:285px;font-size:12.5px;right:108.80px;color:#2b2b2b;transform:scaleX(0.9300);transform-origin:right center;">50.000,00 €</div>
<div class="t" style="top:311px;font-size:12.5px;left:947.20px;color:#606060;font-weight:700;transform:scaleX(0.9656);transform-origin:left center;">a) Ventas</div>
<div class="t" style="top:336px;font-size:12.5px;left:947.20px;color:#606060;font-weight:700;transform:scaleX(0.9432);transform-origin:left center;">b) Prestaciones de servicios</div>
<div class="t" style="top:336px;font-size:12.5px;right:108.80px;color:#2b2b2b;transform:scaleX(0.9300);transform-origin:right center;">50.000,00 €</div>
<div class="t" style="top:362px;font-size:12.5px;left:947.20px;color:#606060;font-weight:700;transform:scaleX(1.1304);transform-origin:left center;">*****</div>
<div class="t" style="top:362px;font-size:12.5px;left:975.10px;color:#606060;font-weight:700;transform:scaleX(0.9707);transform-origin:left center;">: 4. Aprovisionamientos</div>
<div class="t" style="top:362px;font-size:12.5px;right:108.80px;color:#fa5f5b;transform:scaleX(0.9300);transform-origin:right center;">-67.185,36 €</div>
<div class="t" style="top:362px;font-size:12.5px;right:27.60px;color:#fa5f5b;transform:scaleX(0.9300);transform-origin:right center;">-54.370,22 €</div>
<div class="t" style="top:387px;font-size:12.5px;left:947.20px;color:#606060;font-weight:700;transform:scaleX(0.9587);transform-origin:left center;">a) Consumo de mercaderías</div>
<div class="t" style="top:387px;font-size:12.5px;right:108.80px;color:#fa5f5b;transform:scaleX(0.9300);transform-origin:right center;">-67.185,36 €</div>
<div class="t" style="top:387px;font-size:12.5px;right:27.60px;color:#fa5f5b;transform:scaleX(0.9300);transform-origin:right center;">-54.370,22 €</div>
<div class="t" style="top:413px;font-size:12.5px;left:947.20px;color:#606060;font-weight:700;transform:scaleX(0.9635);transform-origin:left center;">b) Consumo materias primas y otras mat. cons.</div>
<div class="t" style="top:413px;font-size:12.5px;right:108.80px;color:#2b2b2b;transform:scaleX(0.9300);transform-origin:right center;">0,00 €</div>
<div class="t" style="top:413px;font-size:12.5px;right:27.60px;color:#2b2b2b;transform:scaleX(0.9300);transform-origin:right center;">0,00 €</div>
<div class="t" style="top:438px;font-size:12.5px;left:947.20px;color:#606060;font-weight:700;transform:scaleX(1.1304);transform-origin:left center;">*****</div>
<div class="t" style="top:438px;font-size:12.5px;left:975.10px;color:#606060;font-weight:700;transform:scaleX(0.9623);transform-origin:left center;">: 5. Otros ingresos de explotación</div>
<div class="t" style="top:438px;font-size:12.5px;right:27.60px;color:#2b2b2b;transform:scaleX(0.9300);transform-origin:right center;">0,00 €</div>
<div class="t" style="top:464px;font-size:12.5px;left:947.20px;color:#606060;font-weight:700;transform:scaleX(0.9520);transform-origin:left center;">a) Ingresos accesorios y gestión corriente</div>
<div class="t" style="top:464px;font-size:12.5px;right:27.60px;color:#2b2b2b;transform:scaleX(0.9300);transform-origin:right center;">0,00 €</div>
<div class="t" style="top:489px;font-size:12.5px;left:947.20px;color:#606060;font-weight:700;transform:scaleX(1.1304);transform-origin:left center;">*****</div>
<div class="t" style="top:489px;font-size:12.5px;left:975.10px;color:#606060;font-weight:700;transform:scaleX(0.9459);transform-origin:left center;">: 6. Gastos de personal</div>
<div class="t" style="top:489px;font-size:12.5px;right:108.80px;color:#fa5f5b;transform:scaleX(0.9300);transform-origin:right center;">-25.732,61 €</div>
<div class="t" style="top:489px;font-size:12.5px;right:27.60px;color:#fa5f5b;transform:scaleX(0.9300);transform-origin:right center;">-1.205,84 €</div>
<div class="t" style="top:515px;font-size:12.5px;left:947.20px;color:#606060;font-weight:700;transform:scaleX(0.9443);transform-origin:left center;">a) Sueldos, salarios y asimilados</div>
<div class="t" style="top:515px;font-size:12.5px;right:108.80px;color:#2b2b2b;transform:scaleX(0.9300);transform-origin:right center;">0,00 €</div>
<div class="t" style="top:540px;font-size:12.5px;left:947.20px;color:#606060;font-weight:700;transform:scaleX(0.9256);transform-origin:left center;">b) Cargas sociales</div>
<div class="t" style="top:540px;font-size:12.5px;right:108.80px;color:#fa5f5b;transform:scaleX(0.9300);transform-origin:right center;">-732,61 €</div>
<div class="t" style="top:540px;font-size:12.5px;right:27.60px;color:#fa5f5b;transform:scaleX(0.9300);transform-origin:right center;">-1.205,84 €</div>
<div class="t" style="top:566px;font-size:12.5px;left:947.20px;color:#606060;font-weight:700;transform:scaleX(1.1304);transform-origin:left center;">*****</div>
<div class="t" style="top:566px;font-size:12.5px;left:975.10px;color:#606060;font-weight:700;transform:scaleX(0.9630);transform-origin:left center;">: 7. Otros gastos de explotación</div>
<div class="t" style="top:566px;font-size:12.5px;right:108.80px;color:#fa5f5b;transform:scaleX(0.9300);transform-origin:right center;">-35.919,95 €</div>
<div class="t" style="top:566px;font-size:12.5px;right:27.60px;color:#fa5f5b;transform:scaleX(0.9300);transform-origin:right center;">-33.220,81 €</div>
<div class="t" style="top:591px;font-size:12.5px;left:947.20px;color:#606060;font-weight:700;transform:scaleX(0.9556);transform-origin:left center;">a) Servicios exteriores</div>
<div class="t" style="top:591px;font-size:12.5px;right:108.80px;color:#fa5f5b;transform:scaleX(0.9300);transform-origin:right center;">-35.419,95 €</div>
<div class="t" style="top:591px;font-size:12.5px;right:27.60px;color:#fa5f5b;transform:scaleX(0.9300);transform-origin:right center;">-32.888,81 €</div>
<div class="t" style="top:617px;font-size:12.5px;left:947.20px;color:#606060;font-weight:700;transform:scaleX(0.9756);transform-origin:left center;">b) Tributos</div>
<div class="t" style="top:617px;font-size:12.5px;right:108.80px;color:#2b2b2b;transform:scaleX(0.9300);transform-origin:right center;">0,00 €</div>
<div class="t" style="top:617px;font-size:12.5px;right:27.60px;color:#2b2b2b;transform:scaleX(0.9300);transform-origin:right center;">0,00 €</div>
<div class="t" style="top:642px;font-size:12.5px;left:947.20px;color:#606060;font-weight:700;transform:scaleX(0.9880);transform-origin:left center;">8. Amortización del inmovilizado</div>
<div class="t" style="top:642px;font-size:12.5px;right:27.60px;color:#2b2b2b;transform:scaleX(0.9300);transform-origin:right center;">0,00 €</div>
<div class="t" style="top:668px;font-size:12.5px;left:947.20px;color:#606060;font-weight:700;transform:scaleX(0.9617);transform-origin:left center;">13. Otros resultados</div>
<div class="t" style="top:668px;font-size:12.5px;right:27.60px;color:#2b2b2b;transform:scaleX(0.9300);transform-origin:right center;">3.169,18 €</div>
<div class="t" style="top:693px;font-size:12.5px;left:947.20px;color:#606060;font-weight:700;transform:scaleX(1.1304);transform-origin:left center;">*****</div>
<div class="t" style="top:693px;font-size:12.5px;left:975.10px;color:#606060;font-weight:700;transform:scaleX(0.9808);transform-origin:left center;">: A.1) Resultado explotación (del 1 al 13)</div>
<div class="t" style="top:693px;font-size:12.5px;right:108.80px;color:#fa5f5b;transform:scaleX(0.9300);transform-origin:right center;">-78.837,92 €</div>
<div class="t" style="top:693px;font-size:12.5px;right:27.60px;color:#fa5f5b;transform:scaleX(0.9300);transform-origin:right center;">-85.737,44 €</div>
<div class="abs" style="left:941.2px;top:715px;width:501.79999999999995px;height:10px;overflow:hidden">
<div class="t" style="top:4px;font-size:12.5px;left:6.00px;color:#606060;font-weight:700;transform:scaleX(1.1304);transform-origin:left center;">*****</div>
<div class="t" style="top:4px;font-size:12.5px;left:33.90px;color:#606060;font-weight:700;transform:scaleX(0.9542);transform-origin:left center;">: 14. Ingresos financieros</div>
</div>
<div class="hdr" style="left:941.2px;top:246px;width:501.79999999999995px;height:36px"></div>
<div class="t" style="top:251px;font-size:14px;left:947.20px;color:#0a0a0a;transform:scaleX(0.8926);transform-origin:left center;">Título Línea</div>
<svg class="abs" style="left:947.2px;top:271.3px" width="9" height="5" viewBox="0 0 9 5"><path d="M0 4.8 L4.4 0 L8.8 4.8 Z" fill="#111"/></svg>
<div class="abs" style="left:1277.05px;top:247.5px;width:1.8px;height:33.3px;background:#b2c6ac"></div>
<div class="abs" style="left:1358.50px;top:247.5px;width:1.6px;height:33.3px;background:#b8c9b2"></div>
<div class="t" style="top:251px;font-size:14px;right:108.80px;color:#0a0a0a;transform:scaleX(0.8425);transform-origin:right center;">2019</div>
<div class="abs" style="left:1439.70px;top:247.5px;width:1.6px;height:33.3px;background:#b8c9b2"></div>
<div class="t" style="top:251px;font-size:14px;right:27.60px;color:#0a0a0a;transform:scaleX(0.9147);transform-origin:right center;">2020</div>
<div class="sb" style="left:904.1px;top:247px;width:6.9px;height:388.8px"></div>
<div class="sb" style="left:12.5px;top:793.7px;width:119.5px;height:8.3px"></div>
<div class="sb" style="left:1444.7px;top:247.5px;width:6.6px;height:295.5px"></div>
<div class="sb" style="left:942.5px;top:726.2px;width:252.5px;height:8.3px"></div>
<div class="abs" style="left:1037px;top:752px;width:414px;height:70px;background:#ebebeb"></div>
<div class="t" style="top:761px;font-size:14.5px;left:1053.00px;color:#111;transform:scaleX(0.9282);transform-origin:left center;">Origen importes</div>
<div class="abs" style="left:1059px;top:792px;width:39.6px;height:20.4px;box-sizing:border-box;border:1px solid #1a1a1a;background:#c9eae6"></div>
<div class="t" style="top:791px;font-size:13px;left:1114.20px;color:#111;transform:scaleX(0.8664);transform-origin:left center;">Presupuesto</div>
<div class="abs" style="left:1183.2px;top:788px;width:9.5px;height:18.2px;background:#d2d2d2"></div>
<div class="abs" style="left:1265px;top:793px;width:39.5px;height:20px;box-sizing:border-box;border:1px solid #1a1a1a;background:#fff"></div>
<div class="t" style="top:790px;font-size:13px;left:1312.20px;color:#111;transform:scaleX(0.8668);transform-origin:left center;">Saldo real</div>
<div class="abs" style="left:1379.9px;top:787px;width:9.5px;height:19.5px;background:#d2d2d2"></div>
</div></body></html>
